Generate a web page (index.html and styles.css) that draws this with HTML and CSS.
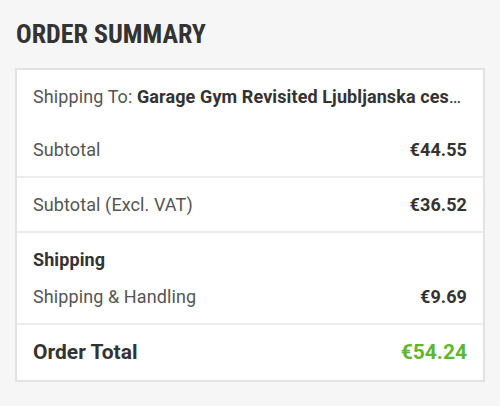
FILE: index.html
```html
<!DOCTYPE html>
<html>
<head>
<meta charset="utf-8">
<link rel="stylesheet" href="styles.css">
</head>
<body>
<div class="page">
  <h2 class="title">ORDER SUMMARY</h2>
  <div class="box">
    <div class="row ship-to"><span class="label">Shipping To: </span><strong class="addr">Garage Gym Revisited Ljubljanska cesta 12, 1000 Ljubljana, Slovenia</strong></div>
    <div class="row line no-border"><span class="label">Subtotal</span><span class="value">€44.55</span></div>
    <div class="row line"><span class="label">Subtotal (Excl. VAT)</span><span class="value">€36.52</span></div>
    <div class="row section">
      <div class="section-title">Shipping</div>
      <div class="line"><span class="label">Shipping &amp; Handling</span><span class="value">€9.69</span></div>
    </div>
    <div class="row line total"><span class="total-label">Order Total</span><span class="total-value">€54.24</span></div>
  </div>
</div>
</body>
</html>
```
FILE: styles.css
```css
html, body {
  margin: 0;
  padding: 0;
  background: #f6f6f6;
}
body {
  font-family: Roboto, "Noto Sans", sans-serif;
  color: #333;
}
.page {
  padding: 16px 15px 0 15px;
}
.title {
  margin: 0 0 0 1px;
  font-size: 26px;
  line-height: 36px;
  font-weight: 700;
  font-stretch: condensed;
  color: #333;
}
.box {
  margin-top: 16px;
  background: #fff;
  border: 2px solid #e2e2e2;
}
.row {
  padding: 16px 16px;
  border-top: 2px solid #ececec;
  font-size: 18px;
  line-height: 21px;
  letter-spacing: 0.1px;
}
.row:first-child, .row.no-border {
  border-top: none;
}
.ship-to {
  white-space: nowrap;
  overflow: hidden;
  text-overflow: ellipsis;
  padding-right: 20px;
}
.label {
  color: #555;
}
.addr {
  color: #333;
  font-weight: 700;
}
.line {
  display: flex;
  justify-content: space-between;
  align-items: center;
}
.value {
  font-weight: 700;
  color: #333;
}
.section-title {
  font-weight: 700;
  color: #333;
  margin-bottom: 16px;
}
.total {
  font-size: 21px;
  line-height: 23px;
  letter-spacing: 0;
}
.total-label {
  font-weight: 700;
  color: #333;
}
.total-value {
  font-weight: 700;
  color: #5fb82c;
}
```
